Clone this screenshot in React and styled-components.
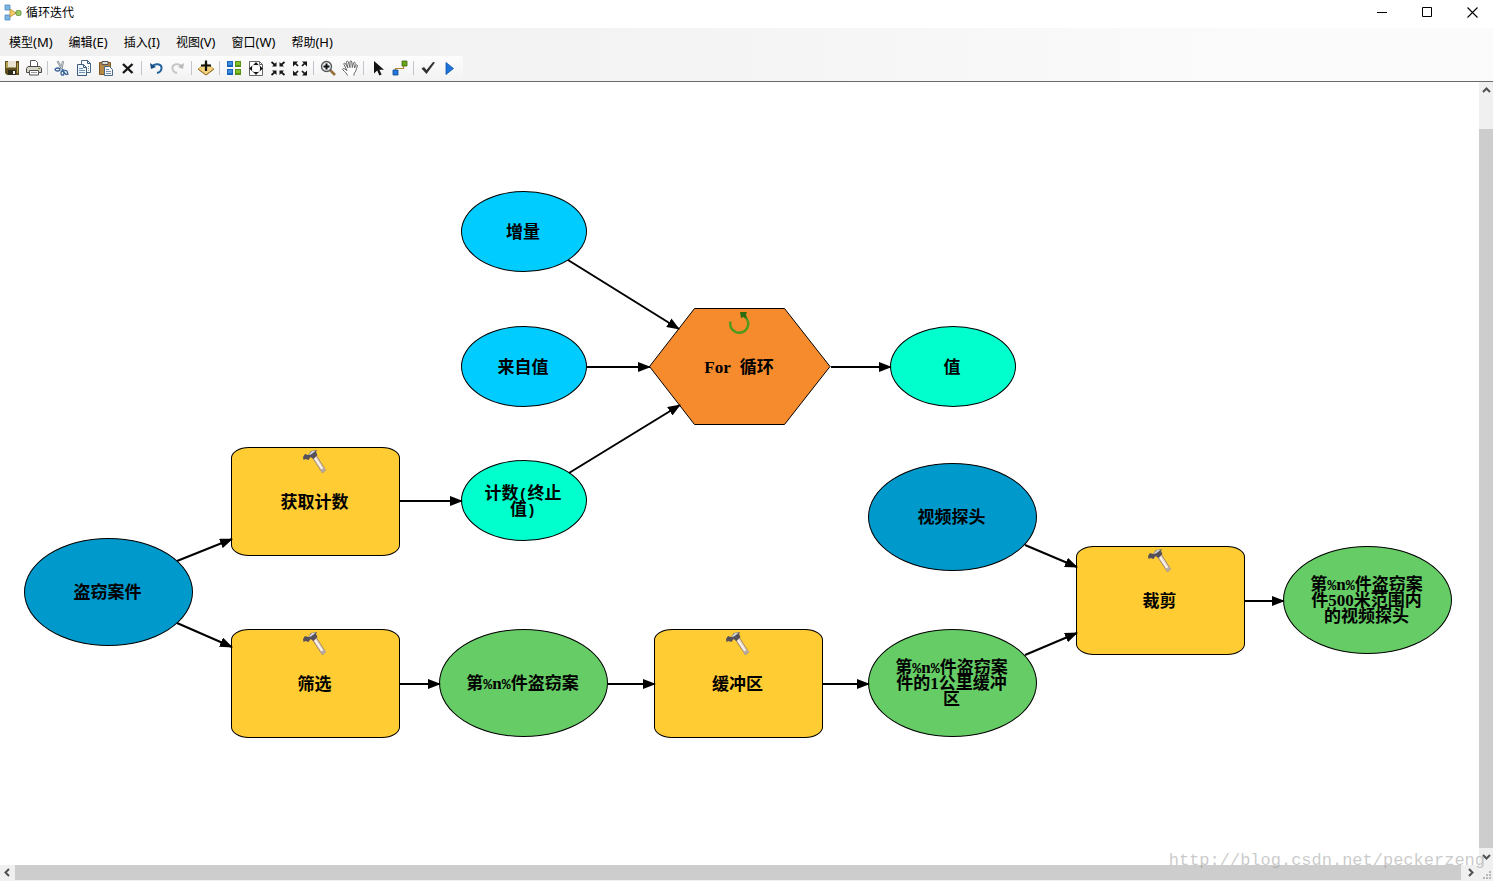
import React from "react";
import styled, { createGlobalStyle } from "styled-components";

const GlobalStyle = createGlobalStyle`
  * {
    box-sizing: border-box;
  }

  body {
    margin: 0;
    background: #fff;
    font-family: "Noto Sans", "Noto Sans CJK SC", sans-serif;
    font-size: 12px;
    color: #000;
  }
`;

// Whole application window
const Window = styled.div`
  display: flex;
  flex-direction: column;
  height: 100vh;
  position: relative;
  overflow: hidden;
`;

// Title bar
const TitleBar = styled.header`
  display: flex;
  align-items: center;
  height: 28px;
  padding: 0 0 3px 4px;
  gap: 4px;
  background: #fff;
`;

const Title = styled.h1`
  flex: 1;
  margin: 0;
  font-size: 12px;
  font-weight: 400;
  line-height: 16px;
`;

const WindowControls = styled.div`
  display: flex;
`;

const WindowButton = styled.button`
  display: flex;
  align-items: center;
  justify-content: center;
  width: 45px;
  height: 24px;
  padding: 0 0 0 4px;
  border: 0;
  background: transparent;
`;

// Menu and toolbar share one background
const CommandArea = styled.div`
  flex: none;
  background: linear-gradient(90deg, #f0f0f0 0%, #f3f3f3 40%, #fbfbfb 85%);
  border-bottom: 1px solid #696969;
`;

const MenuBar = styled.nav`
  display: flex;
  height: 28px;
  padding-left: 1px;
`;

const MenuButton = styled.button`
  padding: 0 8px;
  border: 0;
  background: transparent;
  font: inherit;
  line-height: 28px;
  white-space: nowrap;
`;

const AccessKey = styled.span`
  font-size: 13px;
`;

const Toolbar = styled.div`
  display: flex;
  align-items: center;
  width: max-content;
  height: 25px;
  padding: 0 2px 2px 1px;
  border-radius: 0 3px 3px 0;
  background: linear-gradient(#fdfdfd, #f2f2f2);
`;

const ToolButton = styled.button`
  display: flex;
  align-items: center;
  justify-content: center;
  width: 22px;
  height: 22px;
  padding: 0;
  border: 0;
  background: transparent;
`;

const Separator = styled.span`
  width: 1px;
  height: 14px;
  margin: 0 3px 0 2px;
  background: #c2c6cc;
`;

// Canvas with its two scroll bars
const Workspace = styled.main`
  flex: 1;
  min-height: 0;
  display: grid;
  grid-template-columns: minmax(0, 1fr) 14px;
  grid-template-rows: minmax(0, 1fr) 16px;
`;

const Canvas = styled.section`
  position: relative;
  overflow: hidden;
  background: #fff;
`;

const Connectors = styled.svg`
  position: absolute;
  inset: 0;
  width: 100%;
  height: 100%;
`;

const ScrollBar = styled.div`
  display: flex;
  flex-direction: ${(props) => (props.$vertical ? "column" : "row")};
  padding-bottom: ${(props) => (props.$vertical ? "0" : "1px")};
  background: #f0f0f0;
`;

const ScrollButton = styled.button`
  display: flex;
  align-items: center;
  justify-content: center;
  flex: 0 0 ${(props) => props.$size}px;
  padding: 0;
  border: 0;
  background: #f0f0f0;
`;

const Thumb = styled.div`
  flex: 1;
  margin-top: ${(props) => props.$offset || 0}px;
  background: #cdcdcd;
`;

const Corner = styled.div`
  display: flex;
  align-items: flex-end;
  justify-content: flex-end;
  padding: 0 1px 1px 0;
  background: #f0f0f0;
`;

const Watermark = styled.span`
  position: absolute;
  right: 8px;
  bottom: 10px;
  font-family: "Liberation Mono", monospace;
  font-size: 17px;
  line-height: 20px;
  color: rgba(150, 150, 150, 0.5);
  pointer-events: none;
`;

// Model elements
const sizes = {
  value: [126, 81],
  data: [169, 108],
  tool: [169, 109],
  loop: [182, 117],
};

const Node = styled.div`
  position: absolute;
  left: ${(props) => props.$x}px;
  top: ${(props) => props.$y}px;
  width: ${(props) => sizes[props.$size][0]}px;
  height: ${(props) => sizes[props.$size][1]}px;
  display: flex;
  align-items: center;
  justify-content: center;
  padding: 0 2px 2px 0;
  font-family: "Noto Sans CJK SC", sans-serif;
  font-size: 17px;
  font-weight: 700;
  line-height: 16px;
  text-align: center;
`;

const EllipseNode = styled(Node)`
  border: 1px solid #000;
  border-radius: 50%;
  background: ${(props) => props.$color};
`;

const ToolNode = styled(Node)`
  border: 1px solid #000;
  border-radius: 18px / 11px;
  background: #ffcc33;
`;

const HexagonShape = styled.svg`
  position: absolute;
  inset: 0;
`;

const Label = styled.span`
  position: relative;
  white-space: pre;
`;

const Line = styled.span`
  display: block;
  height: 16px;
`;

const Latin = styled.span`
  font-family: "Liberation Serif", serif;
`;

const Symbol = styled.span`
  font-family: "Liberation Mono", monospace;
  font-size: 15px;
`;

const NodeIcon = styled.svg`
  position: absolute;
  top: 2px;
  left: 50%;
  margin-left: -13px;
`;

const menus = [
  ["模型", "(M)"],
  ["编辑", "(E)"],
  ["插入", "(I)"],
  ["视图", "(V)"],
  ["窗口", "(W)"],
  ["帮助", "(H)"],
];

// Toolbar drawings, all on a 16 x 16 grid
const icons = {
  save: (
    <>
      <path d="M1 1h14v14H3l-2-2z" fill="#5c4f1d" />
      <path d="M2 2h2v6H2zM13 3h1v10h-1z" fill="#b5a355" />
      <path d="M4 1h8v7H4z" fill="#e9e5d2" />
      <path d="M4 7h8v1H4z" fill="#a39a6c" />
      <path d="M4 10h8v5H4z" fill="#2e2a1a" />
      <path d="M9 11h2v3H9z" fill="#f2f2f2" />
    </>
  ),
  print: (
    <>
      <path d="M4.500 7V.500h5l2 2V7" fill="#fff" stroke="#555" />
      <path d="M2 6.500h12l1.500 2v4H.500v-4z" fill="#d7d5c8" stroke="#494949" />
      <path d="M3.500 10.500h9v4.500h-9z" fill="#fff" stroke="#555" />
      <path d="M5 12.500h6" stroke="#999" />
      <path d="M12 8h2v1h-2z" fill="#7a8a30" />
    </>
  ),
  cut: (
    <>
      <path d="M3.500 1L8 9M9 1L7.500 9" stroke="#76828b" strokeWidth="2" fill="none" />
      <path d="M3.500 1L8 8.500M9 1L7.500 8" stroke="#d5dce1" strokeWidth=".8" />
      <ellipse cx="3.500" cy="9.500" rx="2.400" ry="1.500" fill="none" stroke="#335f95" strokeWidth="1.300" />
      <ellipse cx="8.500" cy="13" rx="1.500" ry="2.200" fill="none" stroke="#335f95" strokeWidth="1.300" />
      <path d="M8 9.500l5 1.500 1 3-2 .5-4-4.500" fill="none" stroke="#335f95" strokeWidth="1.200" />
    </>
  ),
  copy: (
    <>
      <path d="M5.500.500h6l3 3v9h-9z" fill="#fff" stroke="#4b6884" />
      <path d="M1.500 4.500h6l3 3v8h-9z" fill="#eef5fb" stroke="#3d5c7b" />
      <path d="M7.500 4.500v3h3M11.500.500v3h3" fill="none" stroke="#3d5c7b" />
      <path d="M3 8.500h4M3 10.500h6M3 12.500h6M12 6.500h1M12 8.500h1M12 10.500h1" stroke="#6e91b4" />
    </>
  ),
  paste: (
    <>
      <path d="M1.500 2.500h11v12h-11z" fill="#b78947" stroke="#805620" />
      <path d="M4 1.500h6v3H4z" fill="#ddd" stroke="#555" />
      <path d="M6.500 6.500h5l3 3v6h-8z" fill="#f4f8fc" stroke="#4b6884" />
      <path d="M8 9.500h3M8 11.500h5M8 13.500h5" stroke="#7590ab" />
    </>
  ),
  remove: <path d="M3 4l9.500 9M12.500 4L3 13" stroke="#161616" strokeWidth="2.400" />,
  undo: (
    <>
      <path d="M4 6.500C7 2.500 14 4 13.500 8.500c-.2 2.500-2 4-4.500 4.500" fill="none" stroke="#23649c" strokeWidth="2" />
      <path d="M2 3l1 6 5-2z" fill="#174d80" />
    </>
  ),
  redo: (
    <>
      <path d="M12 6.500C9 2.500 2 4 2.500 8.500c.2 2.500 2 4 4.500 4.500" fill="none" stroke="#c5c5c5" strokeWidth="2" />
      <path d="M14 3l-1 6-5-2z" fill="#b9b9b9" />
    </>
  ),
  addData: (
    <>
      <path d="M8 3l8 6-8 6-8-6z" fill="#f5d27e" stroke="#c69538" strokeWidth=".8" />
      <path d="M0 9l8 6 8-6" fill="none" stroke="#8c692c" />
      <path d="M8 .500v10.500M3 5.500h10" stroke="#111" strokeWidth="2.200" />
    </>
  ),
  autoLayout: (
    <>
      <path d="M1 1h6v6H1zM1 9h6v6H1z" fill="#1765ba" />
      <path d="M9 1h6v6H9zM9 9h6v6H9z" fill="#579313" />
      <path d="M2 2h4v3H2zM2 10h4v3H2z" fill="#3d8de0" />
      <path d="M10 2h4v3h-4zM10 10h4v3h-4z" fill="#83bf2c" />
    </>
  ),
  fullExtent: (
    <>
      <path d="M1.500 1.500h10l3 3v11h-13z" fill="#fff" stroke="#666" />
      <path d="M11.500 1.500v3h3" fill="none" stroke="#666" />
      <circle cx="8" cy="8.500" r="4.500" fill="none" stroke="#777" strokeDasharray="2 1" />
      <path d="M8 2l2.500 3h-5zM8 15l2.500-3h-5zM1 8.500L4 6v5zM15 8.500L12 6v5z" fill="#111" />
    </>
  ),
  zoomIn: (
    <>
      <path d="M1.500 2l3.500 3M14.500 2L11 5M1.500 15L5 12M14.500 15L11 12" stroke="#161616" strokeWidth="1.700" />
      <path d="M6.500 2v4.500H2zM9.500 2v4.500H14zM6.500 15v-4.500H2zM9.500 15v-4.500H14z" fill="#161616" />
    </>
  ),
  zoomOut: (
    <>
      <path d="M3 3l3 3M13 3l-3 3M3 14l3-3M13 14l-3-3" stroke="#161616" strokeWidth="1.700" />
      <path d="M1 1.500h5L1 6.500zM15 1.500h-5l5 5zM1 15.500h5l-5-5zM15 15.500h-5l5-5z" fill="#161616" />
    </>
  ),
  magnify: (
    <>
      <path d="M10 10l5 5" stroke="#96733d" strokeWidth="2.600" />
      <circle cx="6.500" cy="6.500" r="5" fill="#e8f0f6" stroke="#555" strokeWidth="1.300" />
      <path d="M6.500 3.500v6M3.500 6.500h6" stroke="#111" strokeWidth="2" />
    </>
  ),
  pan: (
    <path
      d="M5.500 15.500c-.5-2-2.500-3.500-4.500-5.500-1-1.200.5-2 1.500-1.200L5 10.500 2 4.500c-.6-1.400.9-2 1.600-.8L6 8 4.500 2.500C4.200 1 5.800.6 6.300 2L8 7.500 8 2c0-1.500 1.700-1.500 1.800 0L10.300 7.500 11.500 3c.4-1.300 2-.8 1.700.5L12.500 8l1.300-2.500c.8-1.200 2-.4 1.500.8-1.500 3.500-1 5-3.300 7.200v2"
      fill="#fff"
      stroke="#555"
      strokeWidth=".9"
    />
  ),
  select: <path d="M4 1v12.500l3.200-3 2.200 5 2.200-1-2.200-4.800H14z" fill="#141414" />,
  connect: (
    <>
      <path d="M3.500 11V8.500h8V4" fill="none" stroke="#b88630" strokeWidth="1.200" />
      <path d="M10 1h5v5h-5z" fill="#69a51c" stroke="#3c6b0b" strokeWidth=".8" />
      <path d="M1 10h5v5H1z" fill="#2476dc" stroke="#0c4691" strokeWidth=".8" />
    </>
  ),
  validate: <path d="M1.500 8.500L4 7l2.500 3L13 2l2 .5L6.500 14z" fill="#333" />,
  run: <path d="M4 2.500l7.500 6-7.500 6z" fill="#1c74d8" stroke="#0e54ad" strokeWidth=".8" />,
};

const toolGroups = [
  [["save", "保存"], ["print", "打印"]],
  [["cut", "剪切"], ["copy", "复制"], ["paste", "粘贴"], ["remove", "删除"]],
  [["undo", "撤消"], ["redo", "恢复"]],
  [["addData", "添加数据或工具"]],
  [["autoLayout", "自动布局"], ["fullExtent", "全图"], ["zoomIn", "固定比例放大"], ["zoomOut", "固定比例缩小"]],
  [["magnify", "放大"], ["pan", "平移"]],
  [["select", "选择"], ["connect", "连接"]],
  [["validate", "验证整个模型"], ["run", "运行"]],
];

const ellipses = [
  { x: 461, y: 109, size: "value", color: "#00ccff", lines: ["增量"] },
  { x: 461, y: 244, size: "value", color: "#00ccff", lines: ["来自值"] },
  { x: 461, y: 378, size: "value", color: "#00ffcc", lines: ["计数(终止", "值)"] },
  { x: 890, y: 244, size: "value", color: "#00ffcc", lines: ["值"] },
  { x: 24, y: 456, size: "data", color: "#0099cc", lines: ["盗窃案件"] },
  { x: 868, y: 381, size: "data", color: "#0099cc", lines: ["视频探头"] },
  { x: 439, y: 547, size: "data", color: "#66cc66", lines: ["第%n%件盗窃案"] },
  { x: 868, y: 547, size: "data", color: "#66cc66", lines: ["第%n%件盗窃案", "件的1公里缓冲", "区"] },
  { x: 1283, y: 464, size: "data", color: "#66cc66", lines: ["第%n%件盗窃案", "件500米范围内", "的视频探头"] },
];

const tools = [
  { x: 231, y: 365, name: "获取计数" },
  { x: 231, y: 547, name: "筛选" },
  { x: 654, y: 547, name: "缓冲区" },
  { x: 1076, y: 464, name: "裁剪" },
];

// x1, y1, x2, y2 of every connector
const connections = [
  [568, 178, 679, 247],
  [587, 285, 650, 285],
  [569, 391, 680, 323],
  [831, 285, 891, 285],
  [400, 419, 462, 419],
  [177, 479, 232, 457],
  [177, 541, 232, 565],
  [400, 602, 440, 602],
  [608, 602, 655, 602],
  [823, 602, 869, 602],
  [1025, 463, 1077, 485],
  [1025, 573, 1077, 551],
  [1245, 519, 1284, 519],
];

const chevrons = {
  up: "M1 6l3.500-3.500L8 6",
  down: "M1 3l3.500 3.500L8 3",
  left: "M6 1L2.500 4.500 6 8",
  right: "M3 1l3.500 3.500L3 8",
};

const Chevron = ({ direction }) => (
  <svg width="9" height="9" viewBox="0 0 9 9">
    <path d={chevrons[direction]} fill="none" stroke="#505050" strokeWidth="2" />
  </svg>
);

// Letters and digits are serif, other ASCII signs are monospaced
const renderPart = (part, index) => {
  if (/^[A-Za-z0-9]/.test(part)) return <Latin key={index}>{part}</Latin>;
  if (/^[\x20-\x7e]/.test(part)) return <Symbol key={index}>{part}</Symbol>;
  return part;
};

const NodeLabel = ({ lines }) => (
  <Label>
    {lines.map((line) => (
      <Line key={line}>{line.split(/([A-Za-z0-9]+|[ %()]+)/).map(renderPart)}</Line>
    ))}
  </Label>
);

const Hammer = () => (
  <NodeIcon width="24" height="24" viewBox="0 0 24 24">
    <path d="M9 7l4-2 9.500 15-3 3z" fill="#e9d5c4" stroke="#8b7767" strokeWidth=".8" />
    <path d="M12 8l8 12" stroke="#fff" strokeWidth="1.200" />
    <path d="M19 23l4-3-1.500-2.500-4 2.500z" fill="#b8a8a0" />
    <path d="M0 7l2-3 3 1 3-4 6-1-1 2 1.500 3-4 4-3-2-2 3-3-1-2 1z" fill="#55505a" />
    <path d="M5 5l4-4 4-.5-5 4z" fill="#d5d8dd" />
  </NodeIcon>
);

const App = () => {
  return (
    <Window>
      <GlobalStyle />

      <TitleBar>
        <svg width="18" height="18" viewBox="0 0 18 18">
          <path d="M5 4l4 5M5 14l4-5h4" fill="none" stroke="#777" />
          <path d="M1 1h5v5H1zM1 11h5v5H1z" fill="#7db5e5" stroke="#4f8dc2" strokeWidth=".8" />
          <path d="M6 5l6 4-6 4z" fill="#f4cd68" stroke="#b48d36" strokeWidth=".8" />
          <rect x="12" y="6.500" width="5" height="5" rx="1.500" fill="#9cca69" stroke="#568a31" strokeWidth=".8" />
        </svg>
        <Title>循环迭代</Title>
        <WindowControls>
          <WindowButton aria-label="最小化">
            <svg width="11" height="11" viewBox="0 0 11 11">
              <path d="M0 5.500h10" stroke="#000" />
            </svg>
          </WindowButton>
          <WindowButton aria-label="最大化">
            <svg width="11" height="11" viewBox="0 0 11 11">
              <path d="M.5.500h9v9h-9z" fill="none" stroke="#000" />
            </svg>
          </WindowButton>
          <WindowButton aria-label="关闭">
            <svg width="11" height="11" viewBox="0 0 11 11">
              <path d="M.5.500l10 10M10.500.500l-10 10" stroke="#000" strokeWidth="1.100" />
            </svg>
          </WindowButton>
        </WindowControls>
      </TitleBar>

      <CommandArea>
        <MenuBar>
          {menus.map(([name, accessKey]) => (
            <MenuButton key={name}>
              {name}
              <AccessKey>{accessKey}</AccessKey>
            </MenuButton>
          ))}
        </MenuBar>
        <Toolbar role="toolbar">
          {toolGroups.map((group, index) => (
            <React.Fragment key={index}>
              {index > 0 && <Separator />}
              {group.map(([icon, label]) => (
                <ToolButton key={icon} aria-label={label}>
                  <svg width="16" height="16" viewBox="0 0 16 16">
                    {icons[icon]}
                  </svg>
                </ToolButton>
              ))}
            </React.Fragment>
          ))}
        </Toolbar>
      </CommandArea>

      <Workspace>
        <Canvas>
          {ellipses.map(({ x, y, size, color, lines }) => (
            <EllipseNode key={`${x}-${y}`} $x={x} $y={y} $size={size} $color={color}>
              <NodeLabel lines={lines} />
            </EllipseNode>
          ))}

          {tools.map(({ x, y, name }) => (
            <ToolNode key={name} $x={x} $y={y} $size="tool">
              <Hammer />
              <NodeLabel lines={[name]} />
            </ToolNode>
          ))}

          {/* Loop iterator */}
          <Node $x={649} $y={226} $size="loop">
            <HexagonShape width="182" height="117" viewBox="0 0 182 117">
              <path
                d="M.5 58.500L45.500.500h90l45.500 58-45.500 58h-90z"
                fill="#f68b2e"
                stroke="#000"
              />
            </HexagonShape>
            <NodeIcon width="24" height="24" viewBox="0 0 24 24">
              <path d="M3.500 11.500a9 9 0 1 0 14-5" fill="none" stroke="#4f9a1c" strokeWidth="2.500" />
              <path d="M13 2h7l-1 2 1 5-3-2-3 1z" fill="#2d6b10" />
            </NodeIcon>
            <NodeLabel lines={["For 循环"]} />
          </Node>

          <Connectors>
            <defs>
              <marker
                id="arrow"
                markerUnits="userSpaceOnUse"
                markerWidth="13"
                markerHeight="10"
                refX="12"
                refY="5"
                orient="auto"
              >
                <path d="M0 0l13 5-13 5z" fill="#000" />
              </marker>
            </defs>
            {connections.map(([x1, y1, x2, y2]) => (
              <line
                key={`${x1}-${y1}`}
                x1={x1}
                y1={y1}
                x2={x2}
                y2={y2}
                stroke="#000"
                strokeWidth="2"
                markerEnd="url(#arrow)"
              />
            ))}
          </Connectors>
        </Canvas>

        <ScrollBar $vertical>
          <ScrollButton $size={17} aria-label="向上滚动">
            <Chevron direction="up" />
          </ScrollButton>
          <Thumb $offset={30} />
          <ScrollButton $size={17} aria-label="向下滚动">
            <Chevron direction="down" />
          </ScrollButton>
        </ScrollBar>

        <ScrollBar>
          <ScrollButton $size={15} aria-label="向左滚动">
            <Chevron direction="left" />
          </ScrollButton>
          <Thumb />
          <ScrollButton $size={18} aria-label="向右滚动">
            <Chevron direction="right" />
          </ScrollButton>
        </ScrollBar>

        <Corner>
          <svg width="9" height="9" viewBox="0 0 9 9">
            <path d="M6 0h2v2H6zM3 3h2v2H3zM6 3h2v2H6zM0 6h2v2H0zM3 6h2v2H3zM6 6h2v2H6z" fill="#b8b8b8" />
          </svg>
        </Corner>
      </Workspace>

      <Watermark>http://blog.csdn.net/peckerzeng</Watermark>
    </Window>
  );
};

export default App;
